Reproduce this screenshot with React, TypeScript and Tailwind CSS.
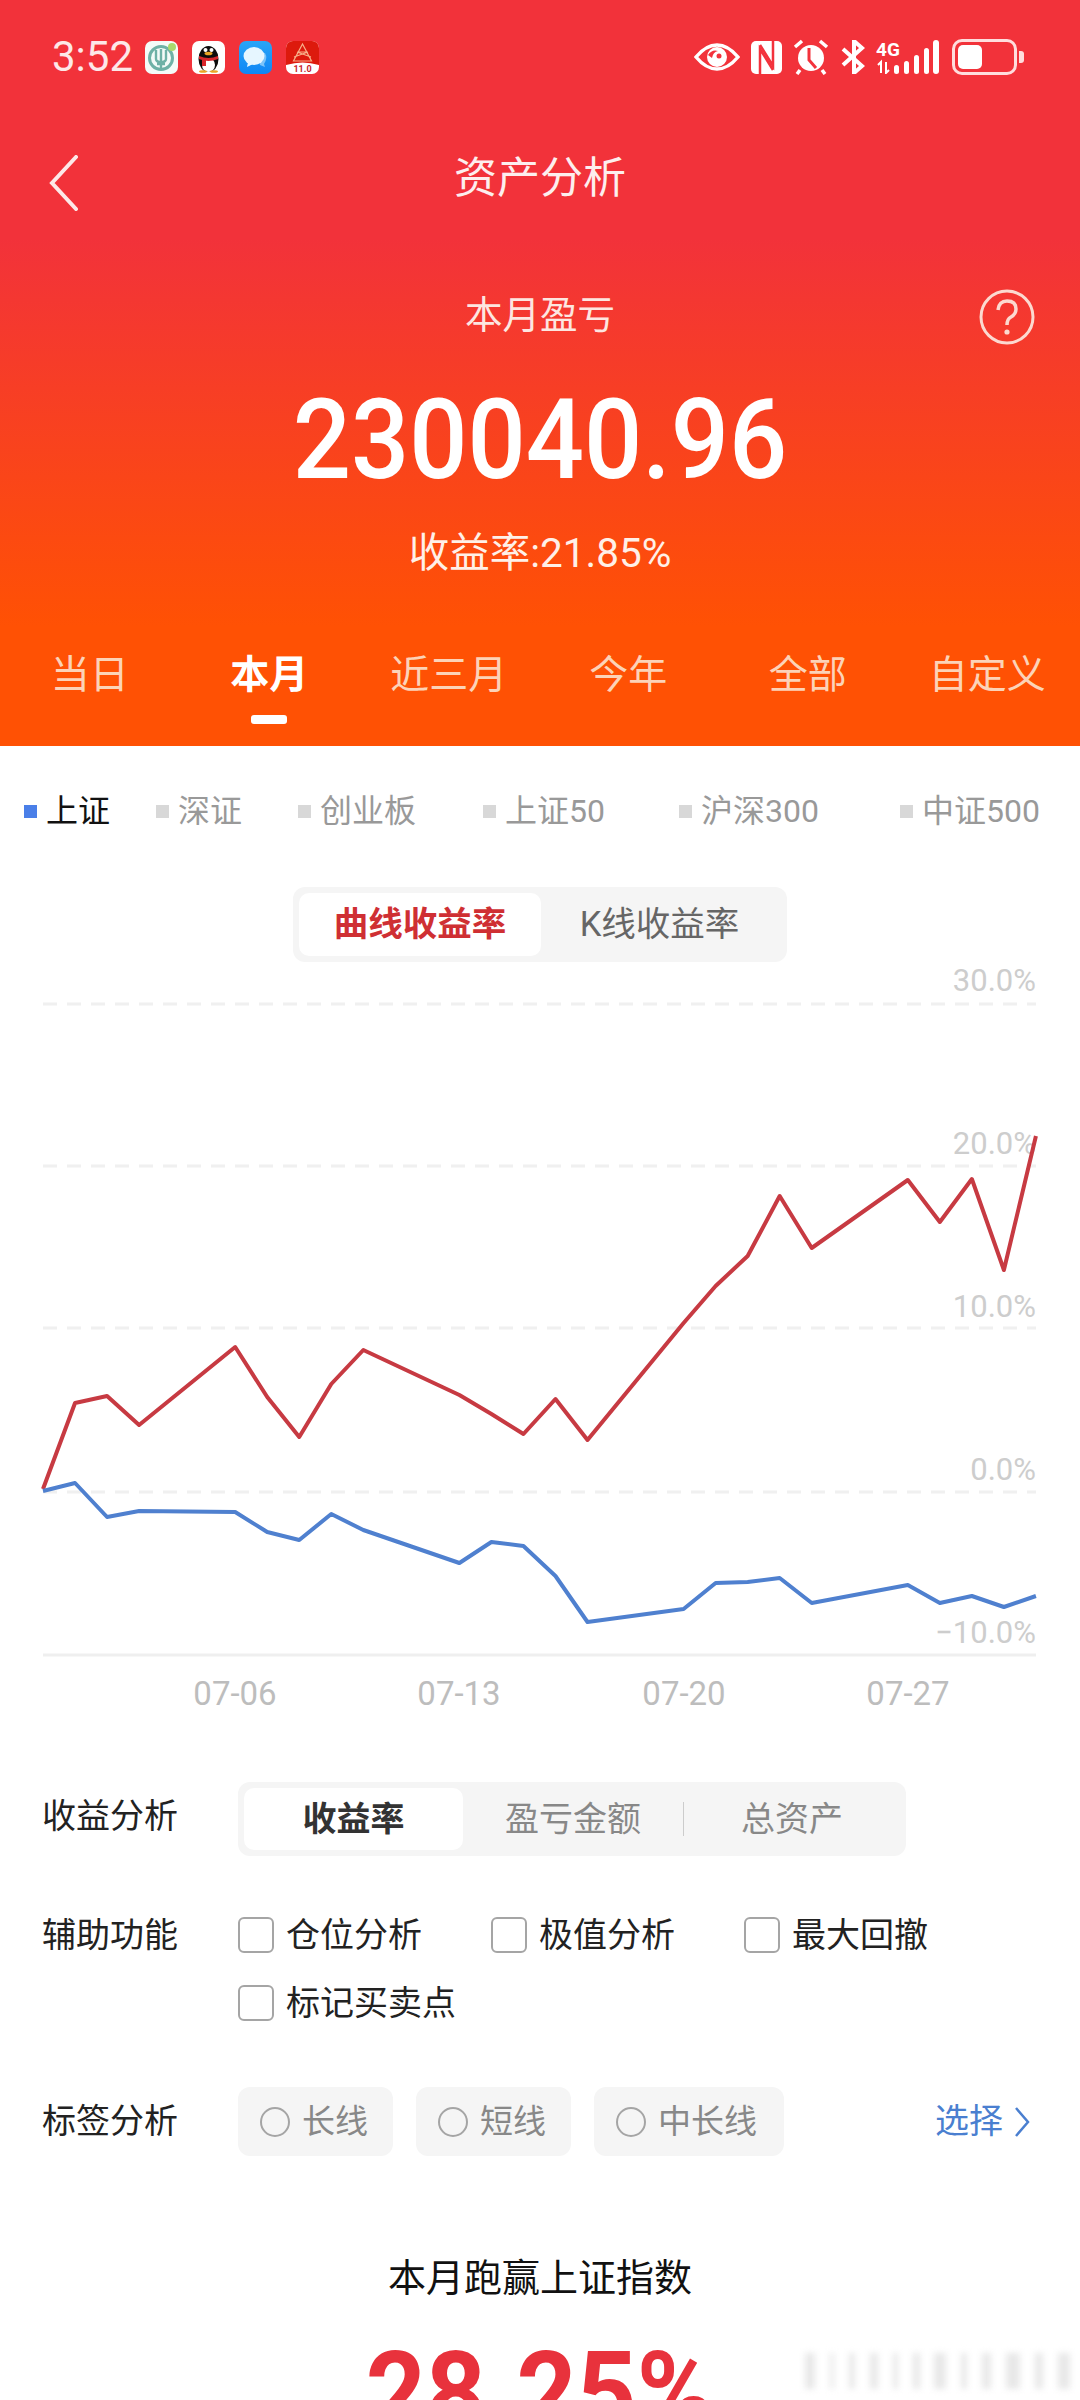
const redY = [1489, 1403, 1396, 1425, 1347, 1397, 1437, 1384, 1350, 1395, 1414, 1434, 1399, 1440, 1323, 1286, 1256, 1196, 1248, 1180, 1222, 1179, 1270, 1136];
const blueY = [1491, 1483, 1517, 1511, 1512, 1532, 1540, 1514, 1530, 1563, 1542, 1546, 1576, 1622, 1609, 1583, 1582, 1578, 1603, 1585, 1603, 1596, 1607, 1596];
// trading days, weekends are skipped on the x axis
const days = [0, 1, 2, 3, 6, 7, 8, 9, 10, 13, 14, 15, 16, 17, 20, 21, 22, 23, 24, 27, 28, 29, 30, 31];

const CHART_TOP = 962;
const toPoints = (ys: number[]) =>
  ys.map((y, i) => `${43 + days[i] * 32.03},${y - CHART_TOP}`).join(' ');

const yLabels = [
  { text: '30.0%', y: 29 },
  { text: '20.0%', y: 192 },
  { text: '10.0%', y: 355 },
  { text: '0.0%', y: 518 },
  { text: '−10.0%', y: 681 },
];
const grid = [42, 204, 366, 530];
const xLabels = [
  { text: '07-06', x: 235 },
  { text: '07-13', x: 459 },
  { text: '07-20', x: 684 },
  { text: '07-27', x: 908 },
];

function AppIcons() {
  return (
    <div className="flex gap-[14px] ml-[12px]">
      <div className="relative w-[33px] h-[33px] rounded-[7px] bg-[#f4fbf8] overflow-hidden">
        <svg viewBox="0 0 33 33" className="w-full h-full" fill="none" stroke="#6fb1a6">
          <circle cx="16" cy="17" r="11.5" strokeWidth="3" />
          <path d="M11 9v9q0 3 5 3t5-3V9M16 8v19M12 23h8" strokeWidth="2.4" />
          <circle cx="27" cy="6" r="4" fill="#a9d86e" stroke="none" />
        </svg>
      </div>
      <div className="w-[33px] h-[33px] rounded-[7px] bg-white overflow-hidden">
        <svg viewBox="0 0 33 33" className="w-full h-full">
          <ellipse cx="16.5" cy="18" rx="10" ry="13" fill="#0c0c0c" />
          <ellipse cx="16.5" cy="24" rx="6.5" ry="7" fill="#fff" />
          <circle cx="13.5" cy="9" r="2" fill="#fff" />
          <circle cx="19.5" cy="9" r="2" fill="#fff" />
          <ellipse cx="16.5" cy="12.5" rx="4" ry="1.8" fill="#eba524" />
          <path d="M7 15q9.500 4 19 0v3q-9.500 4-19 0z" fill="#d8262b" />
          <path d="M10 18h4v7h-4z" fill="#d8262b" />
          <ellipse cx="11" cy="30.500" rx="4" ry="1.300" fill="#eba524" />
          <ellipse cx="22" cy="30.500" rx="4" ry="1.300" fill="#eba524" />
        </svg>
      </div>
      <div className="w-[33px] h-[33px] rounded-[7px] bg-gradient-to-b from-[#2aa5f7] to-[#0f86f5] overflow-hidden">
        <svg viewBox="0 0 33 33" className="w-full h-full">
          <path d="M18 12h8q3 5-1 11l1 3-5-2z" fill="#7cc4fa" />
          <ellipse cx="15" cy="15" rx="10.500" ry="9" fill="#e6f6ff" />
          <path d="M9 21l-1 5 6-3z" fill="#e6f6ff" />
        </svg>
      </div>
      <div className="relative w-[33px] h-[33px] rounded-[7px] bg-white overflow-hidden">
        <svg viewBox="0 0 33 33" className="absolute inset-0 w-full h-full" fill="none">
          <path d="M0 0h33v24q-16.500-5-33 0z" fill="#dd1a0d" />
          <path d="M16.500 3l-9 17h18zM12 11h9M8 16l14-5M25 16l-14-5" stroke="#f8b08a" strokeWidth="1.200" />
        </svg>
        <span className="absolute left-0 right-0 bottom-[-1px] text-center text-[9px] leading-[11px] font-bold text-[#c8242a]">11.0</span>
      </div>
    </div>
  );
}

function SystemIcons() {
  return (
    <div className="flex items-center">
      <svg viewBox="0 0 46 30" className="w-[46px] h-[30px]">
        <path d="M2 15Q12 3 23 3t21 12Q34 27 23 27T2 15z" fill="none" stroke="#fff" strokeWidth="3.500" />
        <circle cx="23" cy="15" r="10" fill="#fff" />
        <path d="M14 13q4-6 10-4-5 1-6 7z" fill="#f3323c" />
        <circle cx="25" cy="14" r="2.500" fill="#f3323c" />
      </svg>
      <svg viewBox="0 0 31 33" className="w-[31px] h-[33px] ml-[11px]">
        <rect width="31" height="33" rx="5" fill="#fff" />
        <path d="M9 33V8l13 21" fill="none" stroke="#f3323c" strokeWidth="2.500" />
        <path d="M22 0v25L9 4" fill="none" stroke="#f3323c" strokeWidth="2.500" />
      </svg>
      <svg viewBox="0 0 36 36" className="w-[36px] h-[36px] ml-[11px]">
        <circle cx="18" cy="19" r="13" fill="#fff" />
        <path d="M16 9v12l7 8" fill="none" stroke="#f3323c" strokeWidth="3" />
        <path d="M2 8l7-6M34 8l-7-6M7 31l-3 4M29 31l3 4" stroke="#fff" strokeWidth="3.500" fill="none" />
      </svg>
      <svg viewBox="0 0 24 34" className="w-[24px] h-[34px] ml-[12px]">
        <path d="M2 9l19 17-8 7V1l8 7L2 25" fill="none" stroke="#fff" strokeWidth="4" />
      </svg>
      <div className="relative w-[64px] h-[34px] ml-[11px]">
        <span className="absolute left-0 top-0 text-[19px] leading-[20px] font-bold text-white">4G</span>
        <svg viewBox="0 0 64 34" className="absolute inset-0 w-full h-full">
          <path d="M5 33v-11l-3 3M10 22v11l3-3" fill="none" stroke="#fff" strokeWidth="2" />
          <rect x="18" y="25" width="5" height="9" rx="2.500" fill="#fff" />
          <rect x="28" y="21" width="5" height="13" rx="2.500" fill="#fff" />
          <rect x="38" y="15" width="5" height="19" rx="2.500" fill="#fff" />
          <rect x="48" y="8" width="5" height="26" rx="2.500" fill="#fff" />
          <rect x="57" y="0" width="6" height="34" rx="3" fill="#fff" />
        </svg>
      </div>
      <div className="flex items-center ml-[12px]">
        <div className="w-[65px] h-[36px] rounded-[10px] border-[3px] border-[#fdd] p-[3px]">
          <div className="w-[24px] h-full rounded-[5px] bg-white" />
        </div>
        <div className="w-[5px] h-[12px] ml-[2px] rounded-r-[3px] bg-[#fdd]" />
      </div>
    </div>
  );
}

function Header() {
  return (
    <header className="h-[746px] bg-[linear-gradient(180deg,#f2323a_32%,#ff5104_84%)] text-white">
      <div className="h-[114px] pl-[52px] pr-[56px] flex items-center justify-between">
        <div className="flex items-center">
          <span className="text-[42px] leading-none text-[#fde8e8]">3:52</span>
          <AppIcons />
        </div>
        <SystemIcons />
      </div>
      <div className="relative h-[178px] pt-[41px] text-center">
        <svg viewBox="0 0 30 56" className="absolute left-[49px] top-[41px] w-[30px] h-[56px]">
          <path d="M27 2L3 28l24 26" fill="none" stroke="#fde8e8" strokeWidth="4" strokeLinecap="round" />
        </svg>
        <h1 className="text-[43px] leading-[46px] text-[#fdeeee]">资产分析</h1>
      </div>
      <div className="relative flex justify-center h-[86px]">
        <p className="text-[37.5px] leading-[46px] text-[#fde6e0]">本月盈亏</p>
        <svg viewBox="0 0 56 56" className="absolute right-[45px] top-[-3px] w-[56px] h-[56px]">
          <circle cx="28" cy="28" r="26" fill="none" stroke="#fcd9d0" strokeWidth="3" />
          <path d="M19 21q1-9 9-9 9 0 9 8 0 5-5 8-4 2-4 8" fill="none" stroke="#fcd9d0" strokeWidth="3.500" />
          <circle cx="28" cy="43" r="2.600" fill="#fcd9d0" />
        </svg>
      </div>
      <p className="text-center text-[112px] leading-[124px] font-medium scale-x-[0.915]">230040.96</p>
      <p className="text-center text-[40.5px] leading-[48px] mt-[27px] text-[#fff0e8]">收益率:21.85%</p>
      <nav className="grid grid-cols-6 mt-[74px] pr-[3px]">
        {['当日', '本月', '近三月', '今年', '全部', '自定义'].map((t) => (
          <div key={t} className="flex flex-col items-center">
            <span className={t === '本月' ? 'text-[39px] leading-[48px] font-bold text-white' : 'text-[39px] leading-[48px] text-[#fcd3b8]'}>{t}</span>
            {t === '本月' && <span className="w-[36px] h-[9px] mt-[16px] rounded-[3px] bg-white" />}
          </div>
        ))}
      </nav>
    </header>
  );
}

function Legend() {
  const items = ['上证', '深证', '创业板', '上证50', '沪深300', '中证500'];
  return (
    <div className="grid grid-cols-[132px_142px_185px_196px_221px_auto] pl-[24px] pt-[41px] h-[141px]">
      {items.map((t, i) => (
        <div key={t} className="flex items-center h-[48px] gap-[9px]">
          <span className={i === 0 ? 'w-[13px] h-[13px] bg-[#4a7fe8]' : 'w-[13px] h-[13px] bg-[#d8d8d8]'} />
          <span className={i === 0 ? 'text-[32px] text-[#111]' : 'text-[32px] text-[#999]'}>{t}</span>
        </div>
      ))}
    </div>
  );
}

function ChartToggle() {
  return (
    <div className="mx-auto flex w-[494px] h-[75px] rounded-[12px] bg-[#f5f5f5] p-[6px]">
      <div className="w-[242px] rounded-[10px] bg-white flex items-center justify-center text-[34.5px] font-bold text-[#cf2f33]">曲线收益率</div>
      <div className="flex-1 flex items-center justify-center pr-[3px] text-[34.5px] text-[#666]">K线收益率</div>
    </div>
  );
}

function Chart() {
  return (
    <svg viewBox="0 0 1080 758" className="block w-[1080px] h-[758px]">
      {grid.map((y) => (
        <line key={y} x1="43" x2="1036" y1={y} y2={y} stroke="#f0f0f0" strokeWidth="3" strokeDasharray="14 10" />
      ))}
      <line x1="43" x2="1036" y1="693" y2="693" stroke="#efefef" strokeWidth="3" />
      {yLabels.map((l) => (
        <text key={l.text} x="1036" y={l.y} textAnchor="end" fontSize="31" fill="#cdcdcd" fontFamily="Roboto, sans-serif">{l.text}</text>
      ))}
      {xLabels.map((l) => (
        <text key={l.text} x={l.x} y="743" textAnchor="middle" fontSize="33" fill="#bdbdbd" fontFamily="Roboto, sans-serif">{l.text}</text>
      ))}
      <polyline points={toPoints(redY)} fill="none" stroke="#c73a42" strokeWidth="4" strokeLinejoin="round" />
      <polyline points={toPoints(blueY)} fill="none" stroke="#4f80cf" strokeWidth="4" strokeLinejoin="round" />
    </svg>
  );
}

function Checkbox({ label }: { label: string }) {
  return (
    <div className="flex items-center gap-[12px]">
      <span className="w-[36px] h-[36px] rounded-[6px] border-2 border-[#a5a5a5]" />
      <span className="text-[34px] leading-[48px] text-[#222]">{label}</span>
    </div>
  );
}

function Analysis() {
  return (
    <section className="pl-[42px] pr-[43px] text-[34px]">
      <div className="flex items-center h-[74px]">
        <span className="w-[196px] text-[#222] pb-[6px]">收益分析</span>
        <div className="flex w-[668px] h-[74px] rounded-[12px] bg-[#f5f5f5] p-[6px]">
          <div className="w-[219px] rounded-[10px] bg-white flex items-center justify-center font-bold text-[#333]">收益率</div>
          <div className="w-[220px] flex items-center justify-center text-[#888]">盈亏金额</div>
          <div className="w-px h-[34px] self-center bg-[#ccc]" />
          <div className="flex-1 flex items-center justify-center text-[#888]">总资产</div>
        </div>
      </div>
      <div className="flex mt-[55px]">
        <span className="w-[196px] leading-[48px] text-[#222]">辅助功能</span>
        <div className="grid grid-cols-[253px_253px_200px] gap-y-[20px]">
          <Checkbox label="仓位分析" />
          <Checkbox label="极值分析" />
          <Checkbox label="最大回撤" />
          <div className="col-span-3"><Checkbox label="标记买卖点" /></div>
        </div>
      </div>
      <div className="flex items-center mt-[60px] h-[69px]">
        <span className="w-[196px] text-[#222]">标签分析</span>
        <div className="flex gap-[23px]">
          {[{ t: '长线', w: 'w-[155px]' }, { t: '短线', w: 'w-[155px]' }, { t: '中长线', w: 'w-[190px]' }].map((c) => (
            <div key={c.t} className={`${c.w} h-[69px] rounded-[12px] bg-[#f5f5f5] pl-[22px] flex items-center gap-[12px]`}>
              <span className="w-[30px] h-[30px] rounded-full border-2 border-[#a5a5a5]" />
              <span className="text-[33px] text-[#888]">{c.t}</span>
            </div>
          ))}
        </div>
        <div className="ml-auto flex items-center gap-[10px] text-[#4a7fd0] pr-[6px]">
          <span className="text-[34px]">选择</span>
          <svg viewBox="0 0 18 32" className="w-[18px] h-[32px]">
            <path d="M3 2l12 14L3 30" fill="none" stroke="#4a7fd0" strokeWidth="2.500" />
          </svg>
        </div>
      </div>
    </section>
  );
}

function Beat() {
  return (
    <section className="relative mt-[96px] text-center">
      <p className="text-[38px] leading-[52px] text-[#111]">本月跑赢上证指数</p>
      <p className="mt-[27px] text-[114px] leading-[124px] font-bold scale-x-[0.92] text-[#e8323c]">28.25%</p>
      <div className="absolute left-[805px] top-[101px] w-[265px] h-[36px] flex justify-between blur-[3px]">
        {[10, 4, 6, 8, 5, 7, 12, 6, 9, 14, 8, 12].map((w, i) => (
          <span key={i} className="h-full bg-[#e8e8e8]" style={{ width: w }} />
        ))}
      </div>
    </section>
  );
}

export default function App() {
  return (
    <div className="w-[1080px] h-[2400px] overflow-hidden bg-white font-['Roboto','Noto_Sans_CJK_SC',sans-serif]">
      <Header />
      <Legend />
      <ChartToggle />
      <Chart />
      <div className="mt-[62px]">
        <Analysis />
      </div>
      <Beat />
    </div>
  );
}
